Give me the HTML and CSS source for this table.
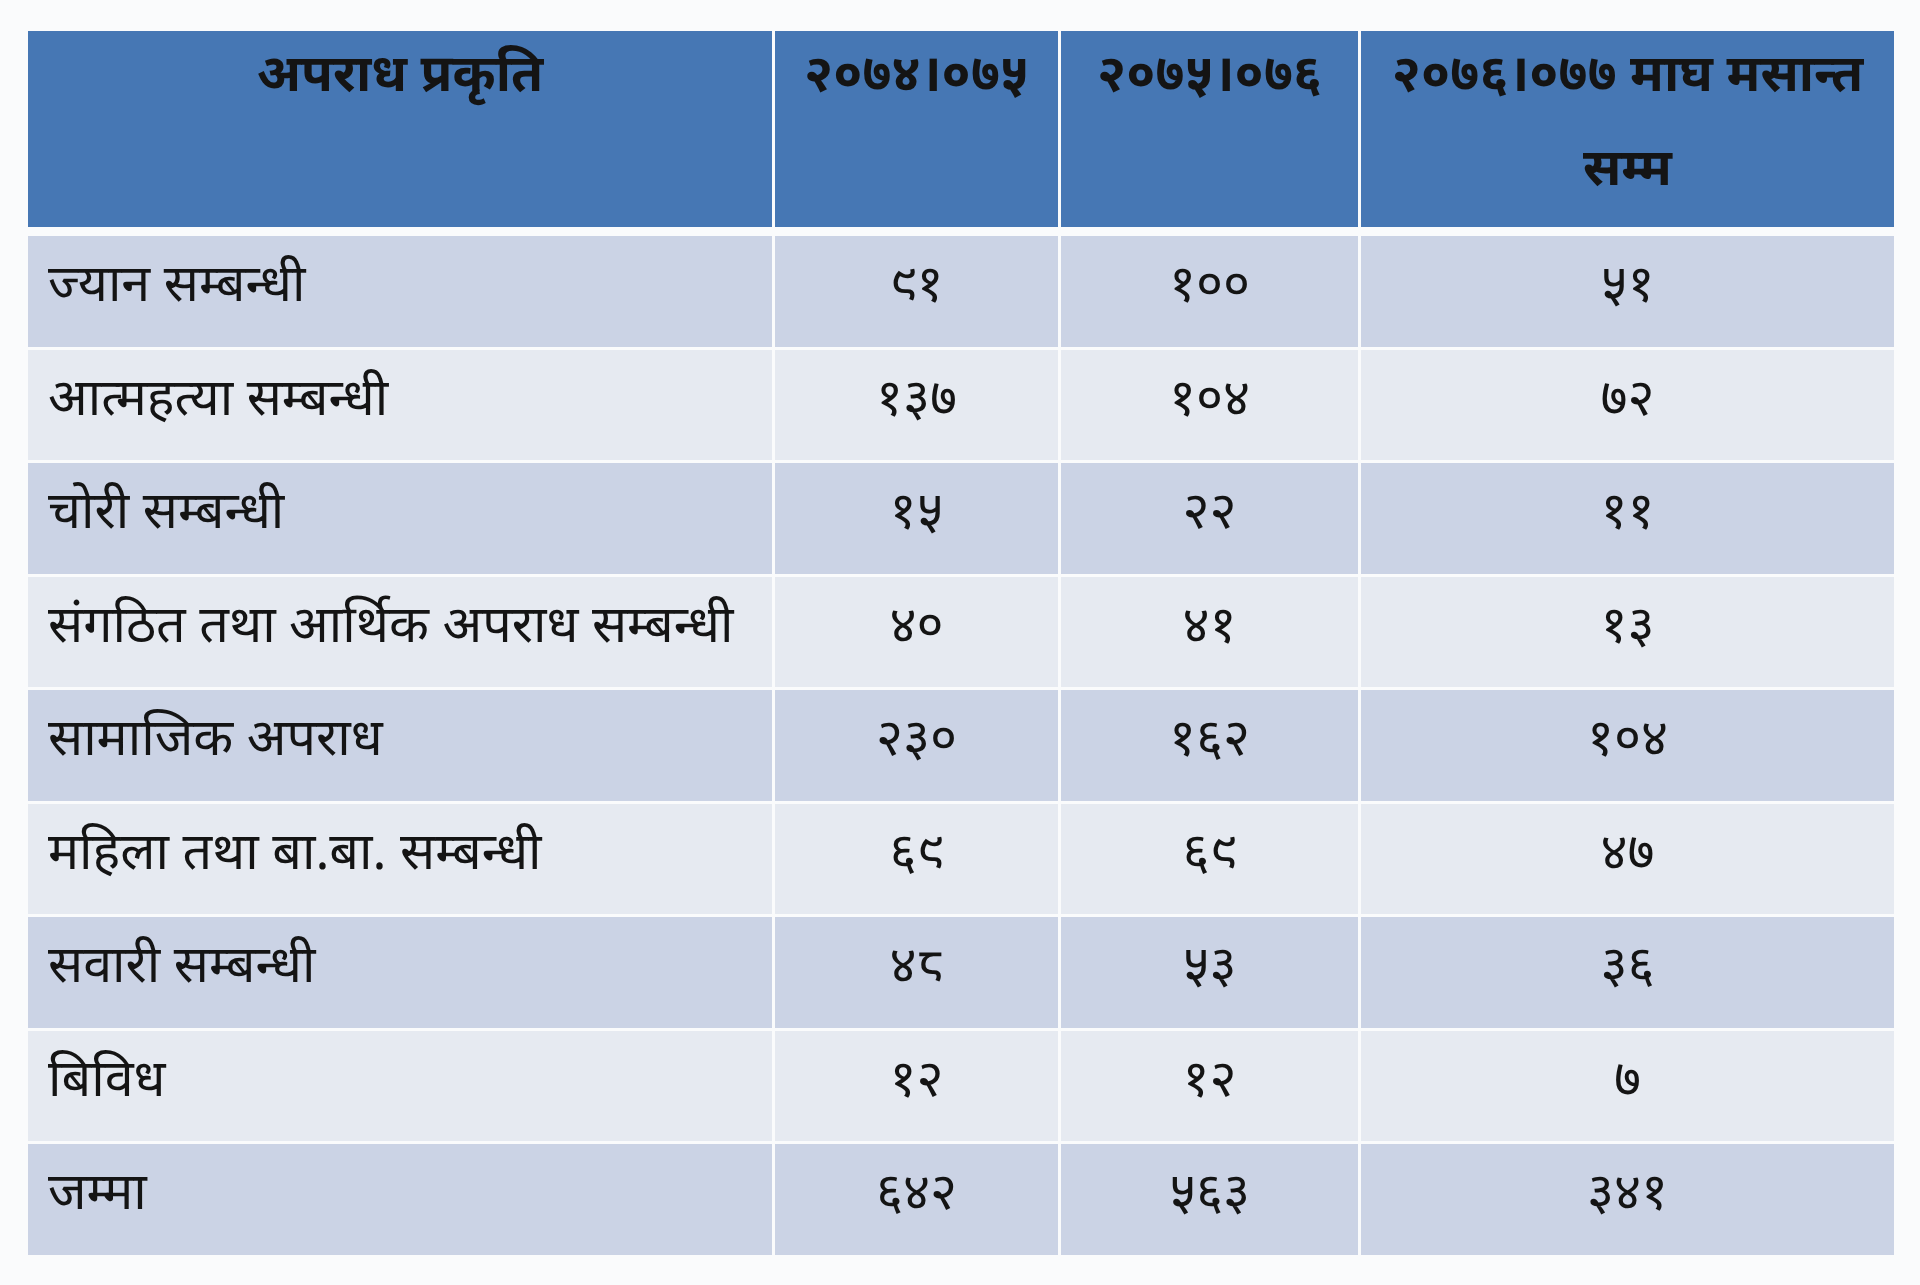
FILE: index.html
```html
<!DOCTYPE html>
<html lang="ne">
<head>
<meta charset="utf-8">
<title>अपराध प्रकृति</title>
<link rel="stylesheet" href="styles.css">
</head>
<body>
<div class="table">
  <div class="cell head first">अपराध प्रकृति</div>
  <div class="cell head">२०७४।०७५</div>
  <div class="cell head">२०७५।०७६</div>
  <div class="cell head">२०७६।०७७ माघ मसान्त सम्म</div>

  <div class="cell dark first">ज्यान सम्बन्धी</div>
  <div class="cell dark num">९१</div>
  <div class="cell dark num">१००</div>
  <div class="cell dark num">५१</div>

  <div class="cell light first">आत्महत्या सम्बन्धी</div>
  <div class="cell light num">१३७</div>
  <div class="cell light num">१०४</div>
  <div class="cell light num">७२</div>

  <div class="cell dark first">चोरी सम्बन्धी</div>
  <div class="cell dark num">१५</div>
  <div class="cell dark num">२२</div>
  <div class="cell dark num">११</div>

  <div class="cell light first">संगठित तथा आर्थिक अपराध सम्बन्धी</div>
  <div class="cell light num">४०</div>
  <div class="cell light num">४१</div>
  <div class="cell light num">१३</div>

  <div class="cell dark first">सामाजिक अपराध</div>
  <div class="cell dark num">२३०</div>
  <div class="cell dark num">१६२</div>
  <div class="cell dark num">१०४</div>

  <div class="cell light first">महिला तथा बा.बा. सम्बन्धी</div>
  <div class="cell light num">६९</div>
  <div class="cell light num">६९</div>
  <div class="cell light num">४७</div>

  <div class="cell dark first">सवारी सम्बन्धी</div>
  <div class="cell dark num">४८</div>
  <div class="cell dark num">५३</div>
  <div class="cell dark num">३६</div>

  <div class="cell light first">बिविध</div>
  <div class="cell light num">१२</div>
  <div class="cell light num">१२</div>
  <div class="cell light num">७</div>

  <div class="cell dark first">जम्मा</div>
  <div class="cell dark num">६४२</div>
  <div class="cell dark num">५६३</div>
  <div class="cell dark num">३४१</div>
</div>
</body>
</html>
```

FILE: styles.css
```css
html, body {
  margin: 0;
  background: #fafbfc;
}
body {
  padding: 31px 0 0 28px;
  font-family: "Noto Sans Devanagari", "Lohit Devanagari", "Noto Sans", "Liberation Sans", sans-serif;
  color: #141414;
}
.table {
  display: grid;
  grid-template-columns: 744px 283px 297px 533px;
  grid-template-rows: 202px repeat(9, 110.5px);
  column-gap: 3px;
  row-gap: 3px;
  width: max-content;
}
.cell {
  font-size: 52px;
  line-height: 1.2;
  padding: 21px 20px 0;
  box-sizing: border-box;
  text-align: center;
}
.cell.first {
  text-align: left;
}
.head {
  background: #4677b4;
  font-weight: bold;
  text-align: center;
  margin-bottom: 6px;
  line-height: 94px;
  padding: 0 12px;
}
.head.first {
  text-align: center;
}
.dark {
  background: #cbd3e5;
}
.light {
  background: #e6eaf1;
}
```
